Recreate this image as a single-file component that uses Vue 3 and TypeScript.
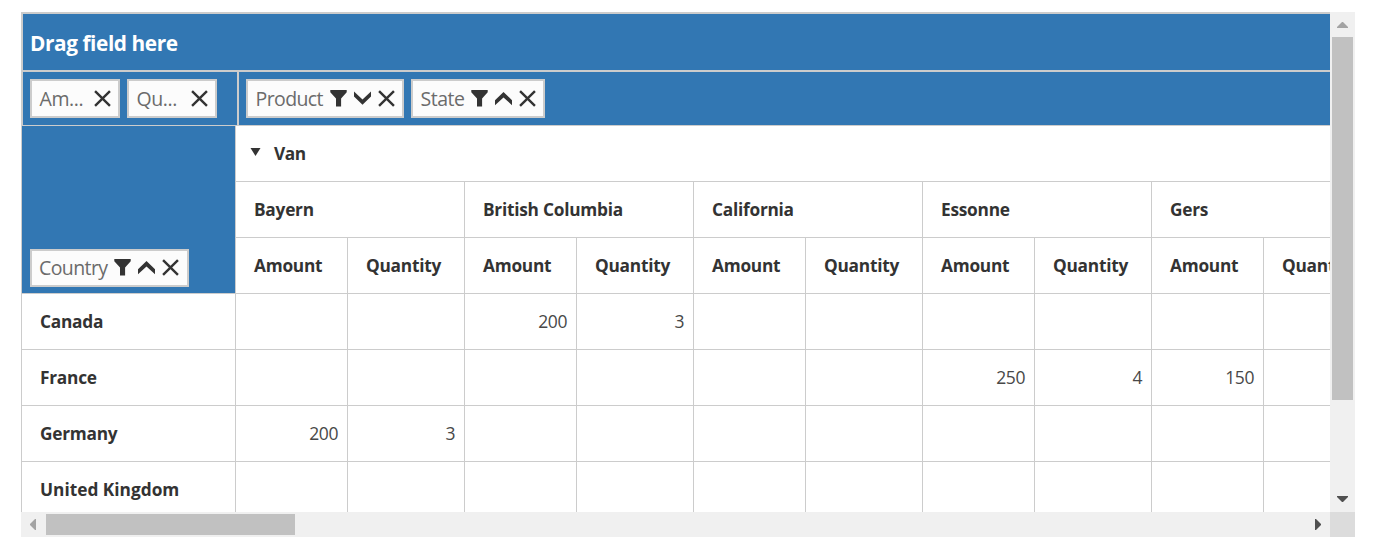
<script setup lang="ts">
type IconName = 'filter' | 'down' | 'up' | 'close'

interface Field {
  key: string
  label: string
  icons: IconName[]
}

const valueFields: Field[] = [
  { key: 'amount', label: 'Am...', icons: ['close'] },
  { key: 'quantity', label: 'Qu...', icons: ['close'] },
]
const columnFields: Field[] = [
  { key: 'product', label: 'Product', icons: ['filter', 'down', 'close'] },
  { key: 'state', label: 'State', icons: ['filter', 'up', 'close'] },
]
const rowFields: Field[] = [
  { key: 'country', label: 'Country', icons: ['filter', 'up', 'close'] },
]

const paths: Record<IconName, string> = {
  filter: 'M0.3 0H16.7V2.2L11.1 8.4V16.6H6V8.4L0.3 2.2Z',
  down: 'M0 1.6L8.5 9.6L17 1.6V6.6L8.5 14.8L0 6.6Z',
  up: 'M0 15.2V10.2L8.5 2L17 10.2V15.2L8.5 7.4Z',
  close: 'M1.9 0.2L8.5 6.8L15.1 0.2L16.8 1.9L10.2 8.5L16.8 15.1L15.1 16.8L8.5 10.2L1.9 16.8L0.2 15.1L6.8 8.5L0.2 1.9Z',
}

const states: string[] = ['Bayern', 'British Columbia', 'California', 'Essonne', 'Gers']

interface Row {
  country: string
  cells: (number | null)[]
}

const row = (country: string, values: Record<number, number> = {}): Row => ({
  country,
  cells: Array.from({ length: 10 }, (_, i) => values[i] ?? null),
})

const rows: Row[] = [
  row('Canada', { 2: 200, 3: 3 }),
  row('France', { 6: 250, 7: 4, 8: 150 }),
  row('Germany', { 0: 200, 1: 3 }),
  row('United Kingdom'),
]
</script>

<template>
  <div class="pivot">
    <div class="viewport">
      <div class="drop-zone"><span class="hint">Drag field here</span></div>
      <div class="field-bar">
        <div class="values-area">
          <div v-for="f in valueFields" :key="f.key" class="chip" :class="f.key">
            <span class="chip-label">{{ f.label }}</span>
            <svg v-for="i in f.icons" :key="i" class="icon" viewBox="0 0 17 17"><path :d="paths[i]" /></svg>
          </div>
        </div>
        <div class="columns-area">
          <div v-for="f in columnFields" :key="f.key" class="chip" :class="f.key">
            <span class="chip-label">{{ f.label }}</span>
            <svg v-for="i in f.icons" :key="i" class="icon" viewBox="0 0 17 17"><path :d="paths[i]" /></svg>
          </div>
        </div>
      </div>
      <div class="grid">
        <div class="corner">
          <div v-for="f in rowFields" :key="f.key" class="chip" :class="f.key">
            <span class="chip-label">{{ f.label }}</span>
            <svg v-for="i in f.icons" :key="i" class="icon" viewBox="0 0 17 17"><path :d="paths[i]" /></svg>
          </div>
        </div>
        <div class="cell group">
          <svg class="expander" viewBox="0 0 10 8"><path d="M0 0H10L5 8Z" /></svg>
          <span>Van</span>
        </div>
        <div v-for="s in states" :key="s" class="cell head state-head">{{ s }}</div>
        <template v-for="s in states" :key="s + '-measures'">
          <div class="cell head">Amount</div>
          <div class="cell head">Quantity</div>
        </template>
        <template v-for="r in rows" :key="r.country">
          <div class="cell head row-head" :class="{ long: r.country.length > 10 }">{{ r.country }}</div>
          <div v-for="(c, i) in r.cells" :key="i" class="cell value">{{ c }}</div>
        </template>
      </div>
    </div>
    <div class="vbar">
      <svg class="arrow-v" viewBox="0 0 11 6"><path class="dim" d="M0 6V5L5 0H6L11 5V6Z" /></svg>
      <div class="vthumb"></div>
      <svg class="arrow-v last" viewBox="0 0 11 6"><path d="M0 0V1L5 6H6L11 1V0Z" /></svg>
    </div>
    <div class="hbar">
      <svg class="arrow-h" viewBox="0 0 6 11"><path class="dim" d="M6 0H5L0 5V6L5 11H6Z" /></svg>
      <div class="hthumb"></div>
      <svg class="arrow-h last" viewBox="0 0 6 11"><path d="M0 0H1L6 5V6L1 11H0Z" /></svg>
    </div>
    <div class="bar-corner"></div>
  </div>
</template>

<style>
body {
  background: #fff;
}
</style>

<style scoped>
.pivot,
.pivot * {
  box-sizing: border-box;
}
.pivot {
  margin: 12px 0 0 21px;
  width: 1334px;
  height: 525px;
  display: grid;
  grid-template-columns: 1309px 25px;
  grid-template-rows: 500px 25px;
  font-family: 'Open Sans', 'Noto Sans', sans-serif;
  font-size: 17.3px;
  color: #333;
  white-space: nowrap;
}
.viewport {
  overflow: hidden;
}
.drop-zone {
  height: 60px;
  border: 2px solid #ccc;
  border-right: 0;
  background: #3277b3;
  display: flex;
  align-items: center;
  padding: 2px 0 0 7px;
  color: #fff;
  font-weight: 700;
  font-size: 20.8px;
}
.hint {
  letter-spacing: -0.42px;
}
.field-bar {
  height: 54px;
  display: flex;
  background: #3277b3;
  border-left: 2px solid #ccc;
  border-bottom: 1px solid #ccc;
}
.values-area {
  width: 216px;
  border-right: 2px solid #ccc;
  padding: 7px 0 0 7px;
  display: flex;
  gap: 7px;
}
.columns-area {
  padding: 7px 0 0 7px;
  display: flex;
  gap: 7px;
}
.chip {
  height: 39px;
  border: 2px solid #ccc;
  background: #fcfcfc;
  display: flex;
  align-items: center;
  padding: 0 7.5px 1px;
  color: #6b6b6b;
  font-size: 19.5px;
}
.chip-label {
  flex: 1;
  min-width: 0;
  letter-spacing: -0.6px;
}
.icon {
  width: 17px;
  height: 17px;
  flex: none;
  fill: #333;
  margin-left: 7px;
}
.amount,
.quantity {
  width: 90px;
}
.amount .chip-label,
.quantity .chip-label {
  letter-spacing: -0.4px;
}
.product {
  width: 158px;
}
.state {
  width: 134px;
}
.state .chip-label {
  letter-spacing: -0.5px;
}
.country {
  width: 159px;
  height: 38px;
  padding: 0 8px 2px 7px;
}
.grid {
  display: grid;
  grid-template-columns: 215px repeat(5, 112px 117px);
  grid-auto-rows: 56px;
  width: 1360px;
}
.corner {
  grid-row: span 3;
  background: #3277b3;
  border: 1px solid #ccc;
  border-top: 0;
  display: flex;
  align-items: flex-end;
  padding: 0 0 6px 8px;
}
.cell {
  border-right: 1px solid #ccc;
  border-bottom: 1px solid #ccc;
  display: flex;
  align-items: center;
  background: #fff;
}
.group {
  grid-column: 2 / 12;
  padding-left: 14px;
  font-weight: 700;
  letter-spacing: -0.4px;
}
.expander {
  width: 11px;
  height: 8px;
  margin: 0 13px 4px 0;
  fill: #333;
}
.head {
  padding-left: 18px;
  font-weight: 700;
  letter-spacing: -0.25px;
}
.state-head {
  grid-column: span 2;
}
.row-head {
  border-left: 1px solid #ccc;
}
.long {
  letter-spacing: 0;
}
.value {
  justify-content: flex-end;
  padding: 0 9px 1px 0;
  font-weight: 400;
  color: #484848;
  font-size: 17.5px;
  letter-spacing: -0.4px;
}
.vbar {
  background: #f0f0f0;
  display: flex;
  flex-direction: column;
  align-items: center;
}
.arrow-v {
  width: 11px;
  height: 6px;
  margin: 10px 0 9px;
  fill: #505050;
}
.arrow-v.last {
  margin: auto 0 10px;
}
.dim {
  fill: #a3a3a3;
}
.vthumb {
  width: 21px;
  height: 363px;
  background: #c1c1c1;
}
.hbar {
  background: #f0f0f0;
  display: flex;
  align-items: center;
}
.arrow-h {
  width: 6px;
  height: 11px;
  margin: 0 10px 0 9px;
  fill: #505050;
}
.arrow-h.last {
  margin: 0 9px 0 auto;
}
.hthumb {
  width: 249px;
  height: 21px;
  background: #c1c1c1;
}
.bar-corner {
  background: #dcdcdc;
}
</style>
